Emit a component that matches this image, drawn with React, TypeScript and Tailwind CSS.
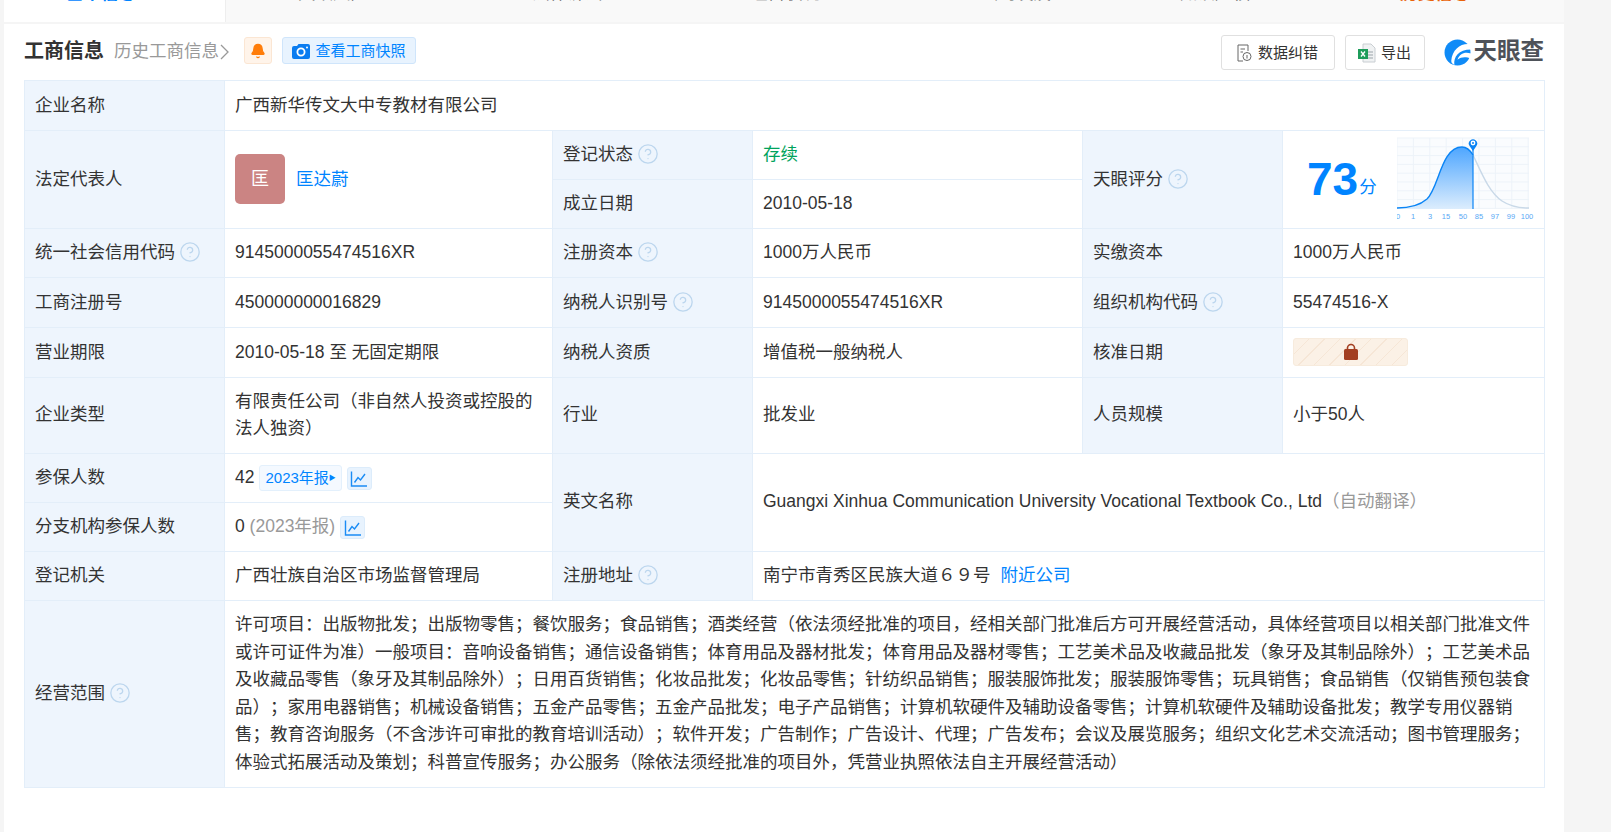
import { ReactNode } from 'react';
import { Bell, HelpCircle } from 'lucide-react';

const font = "font-['Liberation_Sans','Noto_Sans_CJK_SC',sans-serif]";

function Help() {
  return <HelpCircle size={22} strokeWidth={1.4} className="inline-block ml-[4px] align-[-5px] text-[#bcd6ee]" />;
}

function Label({ children, help, rowSpan, colSpan }: { children: ReactNode; help?: boolean; rowSpan?: number; colSpan?: number }) {
  return (
    <td rowSpan={rowSpan} colSpan={colSpan} className="border border-[#e3eef9] bg-[#eef5fd] p-[10px] align-middle">
      {children}
      {help && <Help />}
    </td>
  );
}

function Cell({ children, rowSpan, colSpan }: { children: ReactNode; rowSpan?: number; colSpan?: number }) {
  return (
    <td rowSpan={rowSpan} colSpan={colSpan} className="border border-[#e3eef9] p-[10px] align-middle">
      {children}
    </td>
  );
}

function TrendButton() {
  return (
    <span className="inline-flex w-[25px] h-[23px] ml-[5px] items-center justify-center rounded-[3px] border border-[#dcecfb] bg-[#e8f3fe] align-[-5px]">
      <svg width="18" height="18" viewBox="0 0 18 18" fill="none" stroke="#1a8cf5" strokeWidth="1.4">
        <path d="M1.5 1.5 V16 H17" />
        <path d="M4.5 12.5 L8 7.5 L10.5 10 L15 4" />
      </svg>
    </span>
  );
}

function ScoreChart() {
  const xs = ['0', '1', '3', '15', '50', '85', '97', '99', '100'];
  const ticks = [1, 16, 33, 49, 66, 82, 98, 114, 130];
  return (
    <svg width="138" height="86" viewBox="0 0 138 86" className="block">
      <defs>
        <linearGradient id="fill" x1="0" y1="0" x2="0" y2="1">
          <stop offset="0" stopColor="#4ea6ff" />
          <stop offset="1" stopColor="#dcedfd" />
        </linearGradient>
      </defs>
      <rect x="0" y="2" width="132" height="71" fill="#fafcfe" />
      {[0, 1, 2, 3, 4, 5, 6, 7, 8].map((i) => (
        <line key={i} x1={i * 16.4} x2={i * 16.4} y1="2" y2="73" stroke="#edf3f9" strokeWidth="1" />
      ))}
      {[0, 1, 2, 3, 4, 5, 6, 7, 8].map((i) => (
        <line key={i} x1="0" x2="132" y1={2 + i * 8.8} y2={2 + i * 8.8} stroke="#edf3f9" strokeWidth="1" />
      ))}
      <path d="M0 72 C12 72 22 70 30 63 C42 52 44 11 65 11 C70 11 73 14 76 19 L76 73 L0 73 Z" fill="url(#fill)" />
      <path d="M76 19 C85 38 92 56 105 65 C114 71 125 72 132 72" fill="none" stroke="#c9d9e8" strokeWidth="1.4" />
      <path d="M0 72 C12 72 22 70 30 63 C42 52 44 11 65 11 C70 11 73 14 76 19" fill="none" stroke="#0a84f5" strokeWidth="1.4" />
      <line x1="76" x2="76" y1="12" y2="73" stroke="#0a84f5" strokeWidth="1.2" />
      <path d="M76 15 L72.6 10 A4.2 4.2 0 1 1 79.4 10 Z" fill="#0a84f5" />
      <circle cx="76" cy="7" r="2.4" fill="#fff" />
      <circle cx="76" cy="7" r="1" fill="#0a84f5" />
      <g fill="#58a8f5" fontSize="7.5" textAnchor="middle">
        {xs.map((t, i) => (
          <text key={t} x={ticks[i]} y="83">{t}</text>
        ))}
      </g>
    </svg>
  );
}

function Logo() {
  return (
    <div className="flex items-center gap-[3px]">
      <svg width="27" height="27" viewBox="0 0 26 26">
        <circle cx="13" cy="13" r="12.5" fill="#0f8bf7" />
        <path d="M25 5 C16 4 8 10 7 21 C7 23 8 24 10 25 C9 17 14 10 26 10 Z" fill="#fff" />
        <path d="M26 14 C20 12 15 14 13 20 C17 17 21 17 26 19 Z" fill="#fff" />
      </svg>
      <span className="text-[23.5px] leading-none font-bold text-[#4e5259]">天眼查</span>
    </div>
  );
}

const tabs = [
  { t: '基本信息', x: 'w-[222px] pl-[62px]', c: 'text-[#0084ff] font-bold bg-white border-r border-[#eeeeee]' },
  { t: '天眼风险', x: 'w-[234px] pl-[72px]', c: 'text-[#555]' },
  { t: '法律诉讼', x: 'w-[218px] pl-[72px]', c: 'text-[#555]' },
  { t: '经营状况', x: 'w-[231px] pl-[72px]', c: 'text-[#555]' },
  { t: '公司发展', x: 'w-[199px] pl-[72px]', c: 'text-[#555]' },
  { t: '知识产权', x: 'w-[220px] pl-[72px]', c: 'text-[#555]' },
  { t: '历史信息', x: 'flex-1 pl-[72px]', c: 'text-[#e9630a] font-bold' },
];

export default function App() {
  return (
    <div className={`${font} [text-spacing-trim:space-all] min-h-[832px] bg-[#f5f5f5] text-[17.5px] leading-[27.5px] text-[#333]`}>
      <div className="ml-[4px] w-[1560px] min-h-[832px] bg-white">
        <div className="flex h-[22px] overflow-hidden bg-[#f9f9f9]">
          {tabs.map((tab) => (
            <div key={tab.t} className={`${tab.x} ${tab.c} h-[22px] text-[17.5px]`}>
              <div className="-mt-[20px]">{tab.t}</div>
            </div>
          ))}
        </div>
        <div className="h-[2px] bg-[#f5f5f5]" />
        <div className="px-[20px]">
          <div className="flex items-center h-[56px]">
            <span className="text-[20px] font-bold text-[#333]">工商信息</span>
            <span className="ml-[10px] text-[#999]">历史工商信息</span>
            <svg width="9" height="16" viewBox="0 0 9 16" className="ml-[1px]"><path d="M1 1 L8 8 L1 15" fill="none" stroke="#999" strokeWidth="1.3" /></svg>
            <span className="ml-[15px] -mt-[3px] flex w-[28px] h-[27px] items-center justify-center rounded-[3px] border border-[#fbe6d3] bg-[#fff4ea]">
              <Bell size={16} fill="#ff7d0a" className="text-[#ff7d0a]" />
            </span>
            <span className="ml-[10px] -mt-[3px] flex w-[134px] h-[27px] items-center justify-center gap-[5px] rounded-[3px] border border-[#cfe5fb] bg-[#e8f3fe] text-[15px] text-[#0084ff]">
              <svg width="18" height="16" viewBox="0 0 18 16">
                <path d="M2 3 H5 L6.5 1 H16 A2 2 0 0 1 18 3 V14 A2 2 0 0 1 16 16 H2 A2 2 0 0 1 0 14 V5 A2 2 0 0 1 2 3 Z" fill="#0a7cf0" />
                <circle cx="9" cy="9" r="3.6" fill="none" stroke="#fff" strokeWidth="1.8" />
                <circle cx="15" cy="4.5" r="1" fill="#fff" />
              </svg>
              查看工商快照
            </span>
            <span className="ml-auto mt-[1px] flex w-[114px] h-[35px] items-center justify-center gap-[6px] rounded-[3px] border border-[#e0e0e0] text-[15px]">
              <svg width="15" height="18" viewBox="0 0 15 18" fill="none" stroke="#666" strokeWidth="1"><path d="M11 7 V1 H1 V17 H6" /><path d="M3.5 5 H8 M3.5 8 H6" /><circle cx="10" cy="12.5" r="4" /><path d="M10 11 V14.5" /></svg>
              数据纠错
            </span>
            <span className="ml-[10px] mt-[1px] flex w-[80px] h-[35px] items-center justify-center gap-[5px] rounded-[3px] border border-[#e0e0e0] text-[15px]">
              <svg width="18" height="20" viewBox="0 0 18 20"><path d="M5 1 H13 L17 5 V19 H5 Z" fill="#f0f2f3" stroke="#c9ced2" /><path d="M10 9 H15 M10 12 H15 M10 15 H15" stroke="#9aa3a9" /><rect x="0" y="6" width="10" height="10" fill="#1e9c5a" /><path d="M3 8.5 L7 13.5 M7 8.5 L3 13.5" stroke="#fff" strokeWidth="1.3" /></svg>
              导出
            </span>
            <span className="ml-[19px]"><Logo /></span>
          </div>
          <table className="w-[1520px] table-fixed border-collapse">
            <colgroup>
              <col className="w-[200px]" />
              <col className="w-[328px]" />
              <col className="w-[200px]" />
              <col className="w-[330px]" />
              <col className="w-[200px]" />
              <col className="w-[262px]" />
            </colgroup>
            <tbody>
              <tr className="h-[49.5px]">
                <Label>企业名称</Label>
                <Cell colSpan={5}>广西新华传文大中专教材有限公司</Cell>
              </tr>
              <tr className="h-[49.5px]">
                <Label rowSpan={2}>法定代表人</Label>
                <Cell rowSpan={2}>
                  <div className="flex items-center">
                    <span className="flex w-[50px] h-[50px] items-center justify-center rounded-[5px] bg-[#cb8483] text-[18px] text-[#fff]">匡</span>
                    <span className="ml-[11px] text-[#0084ff]">匡达蔚</span>
                  </div>
                </Cell>
                <Label help>登记状态</Label>
                <Cell><span className="text-[#00a35c]">存续</span></Cell>
                <Label rowSpan={2} help>天眼评分</Label>
                <Cell rowSpan={2}>
                  <div className="flex items-center -my-[10px] -mr-[1px]">
                    <span className="ml-[14px] text-[46px] leading-none font-bold text-[#0084ff]">73</span>
                    <span className="ml-[1px] mt-[16px] text-[#0084ff]">分</span>
                    <span className="ml-auto"><ScoreChart /></span>
                  </div>
                </Cell>
              </tr>
              <tr className="h-[49px]">
                <Label>成立日期</Label>
                <Cell>2010-05-18</Cell>
              </tr>
              <tr className="h-[49px]">
                <Label help>统一社会信用代码</Label>
                <Cell>9145000055474516XR</Cell>
                <Label help>注册资本</Label>
                <Cell>1000万人民币</Cell>
                <Label>实缴资本</Label>
                <Cell>1000万人民币</Cell>
              </tr>
              <tr className="h-[50px]">
                <Label>工商注册号</Label>
                <Cell>450000000016829</Cell>
                <Label help>纳税人识别号</Label>
                <Cell>9145000055474516XR</Cell>
                <Label help>组织机构代码</Label>
                <Cell>55474516-X</Cell>
              </tr>
              <tr className="h-[49.5px]">
                <Label>营业期限</Label>
                <Cell>2010-05-18 至 无固定期限</Cell>
                <Label>纳税人资质</Label>
                <Cell>增值税一般纳税人</Cell>
                <Label>核准日期</Label>
                <Cell>
                  <div className="flex h-[28px] w-[115px] items-center justify-center rounded-[3px] border border-[#f7ebdd] bg-[repeating-linear-gradient(135deg,#fbf1e6_0px,#fbf1e6_10px,#f6e6d6_10px,#f6e6d6_11px)]">
                    <svg width="16" height="18" viewBox="0 0 16 18"><path d="M4.5 7 V5 a3.5 3.5 0 0 1 7 0 V7" fill="none" stroke="#a33f22" strokeWidth="1.6" /><rect x="1" y="6" width="14" height="11" rx="1.5" fill="#a33f22" /></svg>
                  </div>
                </Cell>
              </tr>
              <tr className="h-[75px]">
                <Label>企业类型</Label>
                <Cell>有限责任公司（非自然人投资或控股的法人独资）</Cell>
                <Label>行业</Label>
                <Cell>批发业</Cell>
                <Label>人员规模</Label>
                <Cell>小于50人</Cell>
              </tr>
              <tr className="h-[49px]">
                <Label>参保人数</Label>
                <Cell>
                  42
                  <span className="ml-[5px] inline-flex h-[26px] items-center rounded-[3px] border border-[#e3f0fc] bg-[#f4f9ff] px-[5px] text-[15px] text-[#0084ff]">
                    2023年报
                    <span className="text-[7px]">▶</span>
                  </span>
                  <TrendButton />
                </Cell>
                <Label rowSpan={2}>英文名称</Label>
                <Cell rowSpan={2} colSpan={3}>
                  Guangxi Xinhua Communication University Vocational Textbook Co., Ltd
                  <span className="text-[#999]">（自动翻译）</span>
                </Cell>
              </tr>
              <tr className="h-[49px]">
                <Label>分支机构参保人数</Label>
                <Cell>
                  0 <span className="text-[#999]">(2023年报)</span>
                  <TrendButton />
                </Cell>
              </tr>
              <tr className="h-[49px]">
                <Label>登记机关</Label>
                <Cell>广西壮族自治区市场监督管理局</Cell>
                <Label help>注册地址</Label>
                <Cell colSpan={3}>
                  南宁市青秀区民族大道６９号
                  <span className="ml-[10px] text-[#0084ff]">附近公司</span>
                </Cell>
              </tr>
              <tr className="h-[187px]">
                <Label help>经营范围</Label>
                <Cell colSpan={5}>
                  许可项目：出版物批发；出版物零售；餐饮服务；食品销售；酒类经营（依法须经批准的项目，经相关部门批准后方可开展经营活动，具体经营项目以相关部门批准文件或许可证件为准）一般项目：音响设备销售；通信设备销售；体育用品及器材批发；体育用品及器材零售；工艺美术品及收藏品批发（象牙及其制品除外）；工艺美术品及收藏品零售（象牙及其制品除外）；日用百货销售；化妆品批发；化妆品零售；针纺织品销售；服装服饰批发；服装服饰零售；玩具销售；食品销售（仅销售预包装食品）；家用电器销售；机械设备销售；五金产品零售；五金产品批发；电子产品销售；计算机软硬件及辅助设备零售；计算机软硬件及辅助设备批发；教学专用仪器销售；教育咨询服务（不含涉许可审批的教育培训活动）；软件开发；广告制作；广告设计、代理；广告发布；会议及展览服务；组织文化艺术交流活动；图书管理服务；体验式拓展活动及策划；科普宣传服务；办公服务（除依法须经批准的项目外，凭营业执照依法自主开展经营活动）
                </Cell>
              </tr>
            </tbody>
          </table>
        </div>
      </div>
    </div>
  );
}
